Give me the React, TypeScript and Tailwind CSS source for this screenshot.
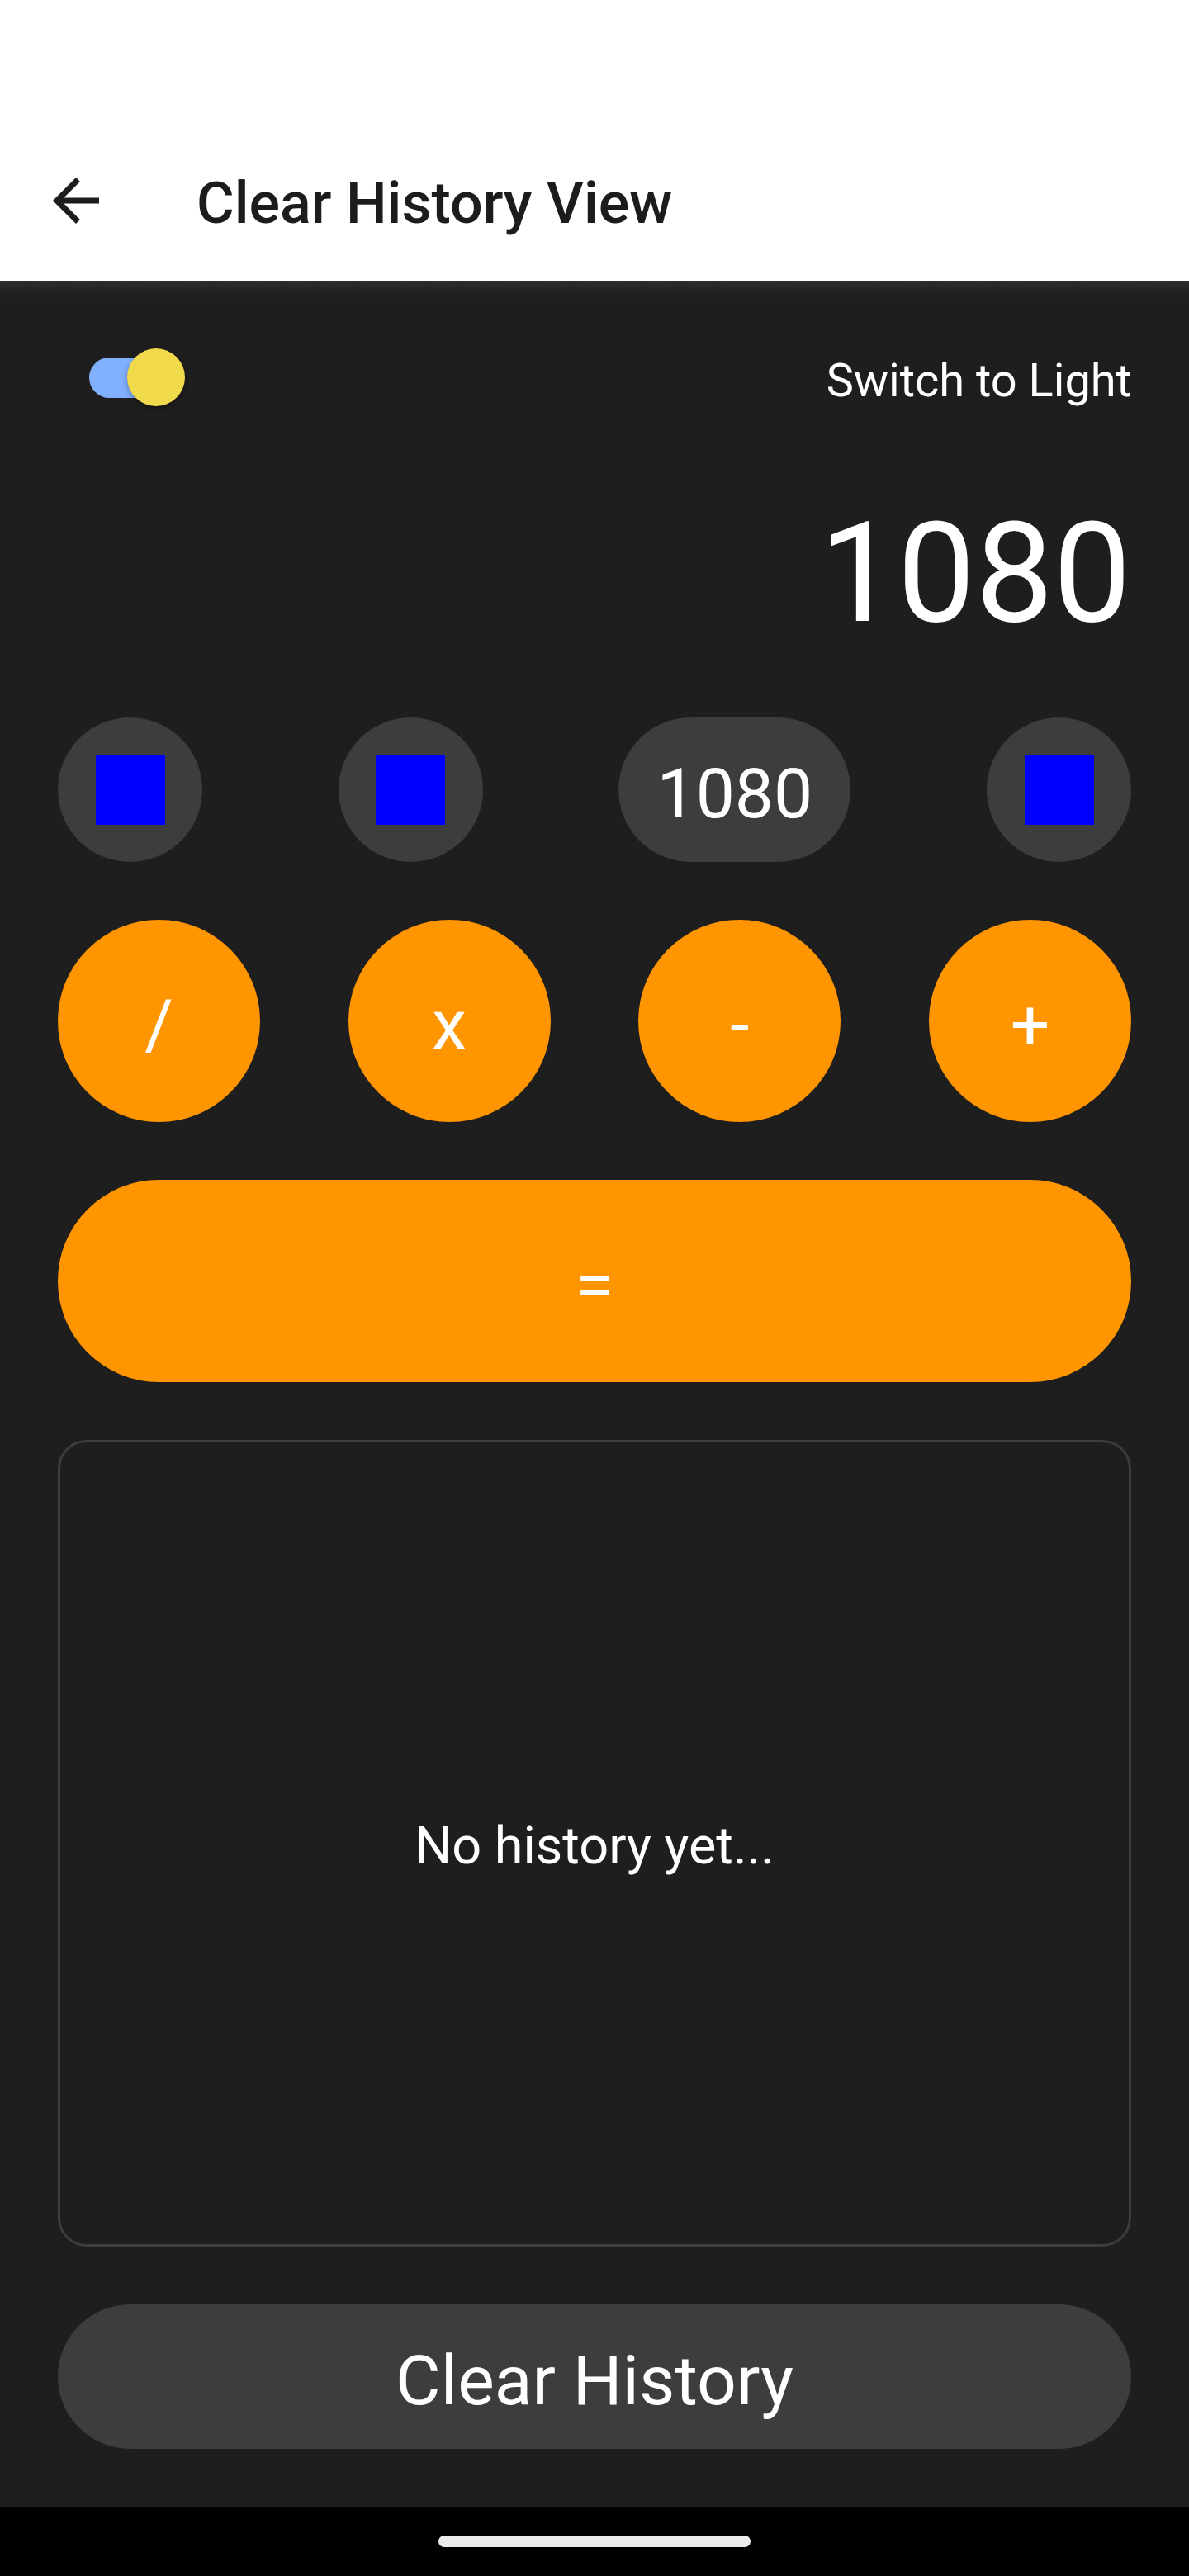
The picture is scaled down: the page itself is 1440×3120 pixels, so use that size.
const keyText = "pt-2.5 text-[84px] leading-none";
const iconKey = "flex size-[175px] items-center justify-center rounded-full bg-[#3d3d3d]";
const operatorKey = "flex size-[245px] items-center justify-center rounded-full bg-[#ff9500]";

function IconKey({ label }: { label: string }) {
  return (
    <button type="button" aria-label={label} className={iconKey}>
      <span className="size-[84px] bg-[#0000ff]" />
    </button>
  );
}

export default function App() {
  return (
    <div className="flex min-h-screen flex-col bg-[#1e1e1e] font-['Roboto',sans-serif] text-white">
      <header className="flex h-[340px] items-end bg-white px-[50px] pb-[55px] text-[#1c1c1e]">
        <button type="button" aria-label="Back" className="mr-[104px] size-[84px]">
          <svg viewBox="0 0 24 24" fill="currentColor" className="size-[84px]">
            <path d="M20 11H7.83l5.59-5.59L12 4l-8 8 8 8 1.41-1.41L7.83 13H20v-2z" />
          </svg>
        </button>
        <h1 className="text-[70px] leading-[78px] font-medium">Clear History View</h1>
      </header>
      <main className="flex grow flex-col bg-linear-to-b from-[#2e302f] via-[#212121] via-[12px] to-[#1e1e1e] to-[24px] p-[70px]">
        <div className="flex h-[94px] items-center justify-between">
          <div className="relative ml-[38px] flex h-[70px] w-[116px] items-center">
            <input
              id="theme"
              type="checkbox"
              role="switch"
              defaultChecked
              className="absolute inset-0 z-10 size-full opacity-0"
            />
            <span className="h-[49px] w-[98px] rounded-full bg-[#81b0ff]" />
            <span className="absolute right-0 size-[70px] rounded-full bg-[#f0d94b] shadow-[0_3px_7px_rgba(0,0,0,0.3)]" />
          </div>
          <label htmlFor="theme" className="pt-2 text-[56px] leading-[66px]">
            Switch to Light
          </label>
        </div>
        <output className="mt-[92px] mb-[75px] text-right text-[168px] leading-[198px]">1080</output>
        <div className="flex flex-col gap-[70px] grow">
          <div className="flex justify-between">
            <IconKey label="Clear" />
            <IconKey label="Delete" />
            <button type="button" className={`h-[175px] rounded-full bg-[#3d3d3d] px-[46px] ${keyText}`}>
              1080
            </button>
            <IconKey label="Copy" />
          </div>
          <div className="flex justify-between">
            {["/", "x", "-", "+"].map((sign) => (
              <button key={sign} type="button" className={`${operatorKey} ${keyText}`}>
                {sign}
              </button>
            ))}
          </div>
          <button type="button" className={`h-[245px] rounded-full bg-[#ff9500] ${keyText}`}>
            =
          </button>
          <section className="flex grow items-center justify-center rounded-[35px] border-[3px] border-[#3d3d3d]">
            <p className="pt-1.5 text-[63px] leading-[74px]">No history yet...</p>
          </section>
          <button type="button" className={`h-[175px] rounded-full bg-[#3d3d3d] ${keyText}`}>
            Clear History
          </button>
        </div>
      </main>
      <footer className="flex h-[84px] items-center justify-center bg-black">
        <div className="h-[14px] w-[378px] rounded-full bg-[#ebebeb]" />
      </footer>
    </div>
  );
}
